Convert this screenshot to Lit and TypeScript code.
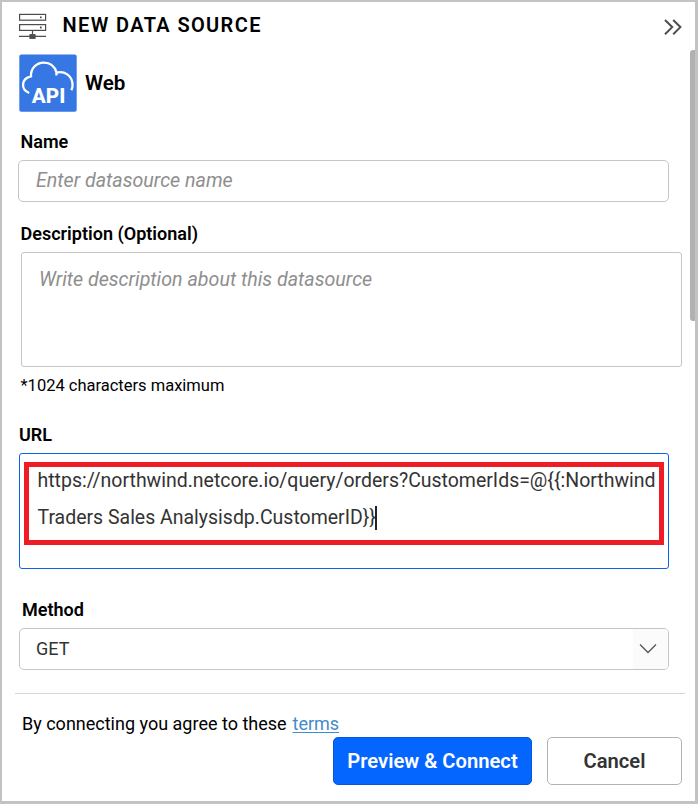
import { LitElement, html, css, svg } from "lit";
import { customElement } from "lit/decorators.js";

const serverIcon = svg`
  <svg class="server" width="28" height="27" viewBox="0 0 28 27" fill="none" stroke="#4d4d4d" stroke-width="1.2">
    <rect x="0.6" y="1.4" width="26" height="5.8"/>
    <rect x="0.6" y="11.6" width="26" height="5.8"/>
    <path d="M21 4.3H22.6M21 14.5H22.6" stroke-width="1.8"/>
    <path d="M13.5 17.5V21M0 23.4H27"/>
    <rect x="11" y="21.7" width="5" height="3.6" fill="#4d4d4d"/>
  </svg>`;

const apiIcon = svg`
  <svg class="api" width="58" height="58" viewBox="0 0 58 58">
    <rect x="0.3" y="0.6" width="57.4" height="57.2" rx="2" fill="#3777e3"/>
    <path d="M10.2 39C5.8 37.3 3.7 34.2 4.1 30.2C4.4 26.2 7.3 23.4 12 22.4C11.6 14.5 17.3 8.6 24.8 8.6C31 8.6 35.7 12.2 37.6 18.6C45.7 16.6 52.6 21.6 53.5 29.5C53.8 32 53.4 34.2 52.4 36.3M37.4 17.5V21.5" fill="none" stroke="#fff" stroke-width="2.3"/>
    <text class="api-text" x="12.8" y="48.8" textLength="33.5" lengthAdjust="spacingAndGlyphs">API</text>
  </svg>`;

@customElement("app-root")
export class AppRoot extends LitElement {
  static styles = css`
    :host { display: block; font-family: Roboto, "Liberation Sans", sans-serif; color: #000; }
    * { box-sizing: border-box; }
    .panel {
      width: 698px; height: 804px; background: #fff;
      border: solid #c3c3c3; border-width: 2px 3px 3px 2px;
      display: flex; flex-direction: column; position: relative; overflow: hidden;
      white-space: nowrap;
    }
    svg { display: block; flex: none; }
    .header { display: flex; height: 50px; padding: 9px 12px 0 17px; }
    .header .server { margin-top: 2px; }
    .title { margin: 0 auto 0 15.5px; font-size: 20px; line-height: 28px; font-weight: 600; letter-spacing: 1.37px; }
    .chevrons { margin-top: 8px; }
    .type { display: flex; height: 78px; padding: 2px 0 0 17px; font-size: 20.6px; line-height: 58px; font-weight: 600; }
    .type span { margin-left: 8px; }
    .api-text { font-family: Roboto, sans-serif; font-weight: 800; font-size: 20.5px; fill: #fff; }
    .label { font-size: 18.05px; line-height: 24px; font-weight: 600; padding-left: 18.5px; }
    .label.url { padding-left: 17px; }
    .label.method { padding-left: 20px; }
    .box { border: 1px solid #c5c5c5; border-radius: 5px; }
    .ph { color: #8e8e8e; font-style: italic; font-size: 19.65px; font-weight: 400; }
    .name { margin: 6px 0 20px 16px; width: 651px; height: 42px; padding-left: 17px; line-height: 39px; }
    .desc { margin: 6px 0 6px 19px; width: 661px; height: 115px; padding: 8px 0 0 17px; line-height: 37px; border-radius: 3px; }
    .hint { font-size: 16.5px; line-height: 25px; padding-left: 18.5px; margin-bottom: 25px; }
    .urlbox { margin: 6px 0 29px 17px; width: 650px; height: 116px; border-color: #0a66e8; border-radius: 3px; padding: 8px 4px; }
    .mark { height: 83px; border: 5px solid #ee1c25; padding-left: 8.5px; font-size: 19.48px; line-height: 37px; color: #333; }
    .line { display: flex; align-items: center; height: 37px; }
    .line:first-child { margin-top: -5px; }
    .caret { width: 2px; height: 24px; background: #222; margin-left: -1px; }
    .select { margin: 6px 0 23px 17px; width: 650px; height: 42px; display: flex; justify-content: space-between; padding-left: 16px; font-size: 18px; line-height: 39px; color: #333; overflow: hidden; }
    .drop { width: 35px; background: #fbfbfb; display: flex; align-items: center; padding-left: 6px; }
    .divider { width: 670px; height: 1px; background: #d6d6d6; margin-left: 13px; }
    .terms { font-size: 18px; line-height: 24px; padding-left: 20px; margin-top: 18px; height: 25px; }
    .terms a { color: #428bca; margin-left: 1.5px; text-decoration: underline; text-decoration-thickness: 1px; text-underline-offset: 2px; }
    .actions { display: flex; justify-content: flex-end; gap: 15px; padding-right: 13px; }
    .btn { width: 135px; height: 48px; border: 1px solid #b3b3b3; border-radius: 5px; background: #fff; color: #333; font: 600 20.2px/46px Roboto, sans-serif; padding: 0; text-align: center; }
    .btn.primary { width: 199px; background: #0565ff; border-color: #0556d8; color: #fff; }
    .thumb { position: absolute; right: 0; top: 48px; width: 5px; height: 271px; background: #b1b1b1; border-radius: 3px 0 0 3px; }
  `;

  render() {
    return html`
      <div class="panel">
        <div class="header">
          ${serverIcon}
          <div class="title">NEW DATA SOURCE</div>
          <svg class="chevrons" width="20" height="17" viewBox="0 0 20 17" fill="none" stroke="#4d4d4d" stroke-width="2">
            <path d="M2 1L9.2 8.1L2 15.2M10.2 1L17.4 8.1L10.2 15.2"/>
          </svg>
        </div>
        <div class="type">${apiIcon}<span>Web</span></div>
        <div class="label">Name</div>
        <div class="box name ph">Enter datasource name</div>
        <div class="label">Description (Optional)</div>
        <div class="box desc ph">Write description about this datasource</div>
        <div class="hint">*1024 characters maximum</div>
        <div class="label url">URL</div>
        <div class="box urlbox">
          <div class="mark">
            <div class="line">https://northwind.netcore.io/query/orders?CustomerIds=@{{:Northwind</div>
            <div class="line">Traders Sales Analysisdp.CustomerID}}<span class="caret"></span></div>
          </div>
        </div>
        <div class="label method">Method</div>
        <div class="box select">
          <span>GET</span>
          <span class="drop">
            <svg width="18" height="12" viewBox="0 0 18 12" fill="none" stroke="#555" stroke-width="1.3"><path d="M1 1.5L9 9.5L17 1.5"/></svg>
          </span>
        </div>
        <div class="divider"></div>
        <div class="terms">By connecting you agree to these <a>terms</a></div>
        <div class="actions">
          <button class="btn primary">Preview &amp; Connect</button>
          <button class="btn">Cancel</button>
        </div>
        <div class="thumb"></div>
      </div>`;
  }
}
